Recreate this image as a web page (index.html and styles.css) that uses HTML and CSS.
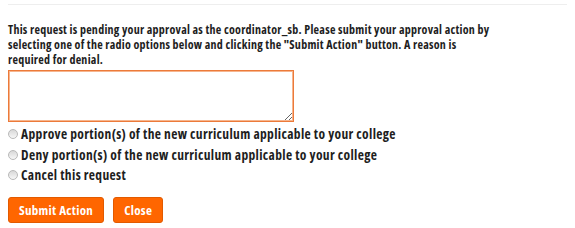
FILE: index.html
```html
<html lang="en">
  <head>
    <meta charset="UTF-8" />
    <title>Approval</title>
    <link rel="stylesheet" href="styles.css">
  </head>
  <body>
    <div class="panel">
      <p class="intro">
        This request is pending your approval as the coordinator_sb. Please submit your approval action by
        selecting one of the radio options below and clicking the "Submit Action" button. A reason is
        required for denial.
      </p>
      <textarea class="reason"></textarea>
      <div class="options">
        <label class="option"><input type="radio" name="action" /> Approve portion(s) of the new curriculum applicable to your college</label>
        <label class="option"><input type="radio" name="action" /> Deny portion(s) of the new curriculum applicable to your college</label>
        <label class="option"><input type="radio" name="action" /> Cancel this request</label>
      </div>
      <div class="actions">
        <button class="btn">Submit Action</button>
        <button class="btn">Close</button>
      </div>
    </div>
  </body>
</html>
```

FILE: styles.css
```css
body {
  margin: 0;
  font-family: "Open Sans", sans-serif;
  font-stretch: semi-condensed;
  color: #1e1e1e;
  background: #fff;
}
.panel {
  margin: 4px 8px 0;
  border-top: 1px solid #eee;
}
.intro {
  margin: 17px 0 3px;
  font-size: 12px;
  font-weight: 700;
  letter-spacing: 0.25px;
  line-height: 15px;
  width: 490px;
}
.reason {
  display: block;
  width: 286px;
  height: 52px;
  box-sizing: border-box;
  border: 1px solid #ec7a3a;
  box-shadow: inset 0 0 0 1px #f6b58e;
  margin: 0;
  padding: 2px;
  font-family: inherit;
}
.options {
  display: flex;
  flex-direction: column;
  margin-top: 2px;
}
.option {
  display: flex;
  align-items: center;
  font-size: 13.5px;
  font-weight: 700;
  letter-spacing: 0.35px;
  height: 20.5px;
}
.option input {
  appearance: none;
  margin: 0 3px 0 0;
  width: 10px;
  height: 10px;
  border: 1px solid #b9b9b9;
  border-radius: 50%;
  background: linear-gradient(#d8d8d8, #f7f7f7);
}
.actions {
  display: flex;
  gap: 9px;
  margin-top: 11px;
}
.btn {
  background: #ff6600;
  border: 1px solid #e25a00;
  border-radius: 3px;
  color: #fff;
  font-family: inherit;
  font-stretch: inherit;
  font-size: 13px;
  font-weight: 700;
  letter-spacing: 0.3px;
  height: 26px;
  padding: 0 10px;
}
```
